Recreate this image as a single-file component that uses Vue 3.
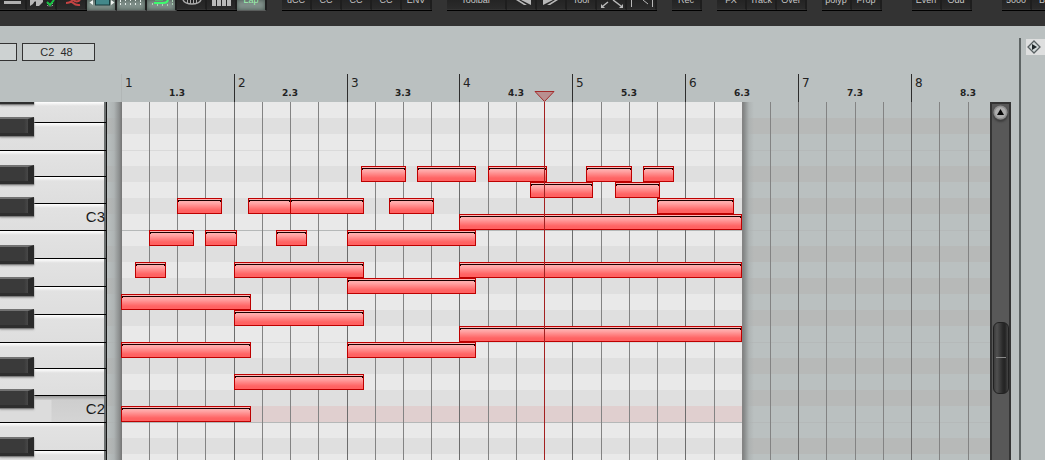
<script setup>
const groups = [
  [
    { icon: 'bar', label: 'Options', w: 27 },
    { icon: 'check', label: 'Quantize' },
    { icon: 'curve', label: 'Humanize' },
    { icon: 'range', label: 'Fit item', lit: true },
    { icon: 'dots', label: 'Grid', lit: true },
    { icon: 'snap', label: 'Snap', lit: true },
    { icon: 'drum', label: 'Drum view' },
    { icon: 'keys', label: 'Piano view' },
    { text: 'Lap', lit: true },
  ],
  [{ text: 'uCC' }, { text: 'CC' }, { text: 'CC' }, { text: 'CC' }, { text: 'ENV' }],
  [
    { text: 'Toolbar', w: 60 },
    { icon: 'prev', label: 'Previous' },
    { icon: 'next', label: 'Next' },
    { text: 'Tool' },
    { icon: 'zoom', label: 'Zoom' },
    { icon: 'fit', label: 'Fit' },
  ],
  [{ text: 'Rec' }],
  [{ text: 'FX' }, { text: 'Track' }, { text: 'Over' }],
  [{ text: 'polyp' }, { text: 'Prop' }],
]
const tailGroups = [
  [{ text: 'Even' }, { text: 'Odd' }],
  [{ text: '5000' }, { text: 'Bar' }],
]
const allGroups = [...groups.map(g => ({ items: g })), ...tailGroups.map(g => ({ items: g, spaced: true }))]

const pitch = 'C2\u00a0\u00a048'

const ROW = 16
const ORIGIN = 14.29
const STEP = 28.225
const at = k => Math.floor(ORIGIN + STEP * k)
const lines = Array.from({ length: 30 }, (_, i) => ({ x: at(i + 1), bar: (i + 1) % 4 === 0 }))
const bars = Array.from({ length: 8 }, (_, i) => ({ n: i + 1, x: at(i * 4), half: at(i * 4 + 2) }))

// one letter per semitone row: w = white, d = black key, k = selected pitch
const rows = [...'wdwwdwdwwdwdwdwwdwdkwdw']
const edges = { 3: 'soft', 8: 'firm', 15: 'soft', 20: 'firm' }

const whiteKeys = [21, 28, 26, 27, 27, 28, 28, 28, 28, 26, 27, 27, 28, 28].map((h, i) => ({
  h,
  label: i === 4 ? 'C3' : i === 11 ? 'C2' : '',
  down: i === 11,
}))
const blackKeys = [-1, 1, 4, 6, 9, 11, 13, 16, 18, 21]

// [row, start, end]
const notes = [
  [4, 254, 299], [4, 310, 369], [4, 381, 440], [4, 479, 525], [4, 536, 567],
  [5, 423, 486], [5, 508, 553],
  [6, 70, 115], [6, 141, 184], [6, 183, 257], [6, 282, 327], [6, 550, 627],
  [7, 352, 635],
  [8, 42, 87], [8, 98, 130], [8, 169, 200], [8, 240, 369],
  [10, 28, 59], [10, 127, 257], [10, 352, 635],
  [11, 240, 369],
  [12, 14, 144], [13, 127, 257], [14, 352, 635],
  [15, 14, 144], [15, 240, 369],
  [17, 127, 257], [19, 14, 144],
]
</script>

<template>
  <div class="editor">
    <header class="toolbar">
      <div v-for="(g, gi) in allGroups" :key="gi" class="group" :class="{ spaced: g.spaced }">
        <button
          v-for="(b, bi) in g.items"
          :key="bi"
          type="button"
          class="tool"
          :class="{ lit: b.lit }"
          :style="{ width: (b.w || 30) + 'px' }"
          :aria-label="b.label"
        >
          <span v-if="b.text">{{ b.text }}</span>
          <svg v-else viewBox="0 0 30 12" width="30" height="12" aria-hidden="true">
            <rect v-if="b.icon === 'bar'" x="6" y="1" width="17" height="3" fill="#b0b0b0" />
            <g v-else-if="b.icon === 'check'">
              <path d="M4 0H17V2L13 6H10V2Q9 0 7 4L4 6Z" fill="#b9b9b9" />
              <path d="M21.500 3v3h5V3" fill="none" stroke="#999" stroke-dasharray="1 1" />
              <path d="M21 2l3 3 4-5" fill="none" stroke="#17c343" stroke-width="2" />
            </g>
            <path v-else-if="b.icon === 'curve'" d="M10 3c3 0 5-1 7-3M15 2c2-1 2 4 9 3M17 0q4 3 7 0" fill="none" stroke="#c54343" stroke-width="2" />
            <g v-else-if="b.icon === 'range'">
              <rect x="9.500" y="-3" width="14" height="8" fill="#43888a" stroke="#173b3d" />
              <path d="M7 0v5L3.500 2.500zM25 0v5l3.500-2.500z" fill="#f0f5f2" />
            </g>
            <path v-else-if="b.icon === 'dots'" d="M4.500 0v6M9.500 3v3M14.500 3v3M19.500 3v3M24.500 0v6M9.500 0v1M14.500 0v1M19.500 0v1" fill="none" stroke="#e4ece8" stroke-dasharray="2 1" />
            <g v-else-if="b.icon === 'snap'">
              <path d="M6.500 3v3M11.500 4v2M16.500 4v2M21.500 4v2M26.500 0v6" stroke="#a9d3b3" stroke-dasharray="2 1" />
              <path d="M8 3h9q5 0 5-4" fill="none" stroke="#3dfc6e" stroke-width="2" />
              <path d="M9 0h8" stroke="#3dfc6e" />
            </g>
            <g v-else-if="b.icon === 'drum'" fill="none" stroke="#aaa">
              <path d="M7 0q2 4 9 4t9-4" stroke-width="1.500" />
              <path d="M11.500 0v4M14.500 0v4M17.500 0v4M20.500 0v4" />
            </g>
            <path v-else-if="b.icon === 'keys'" d="M6 0h4v6H6zM11 0h4v6h-4zM16 0h4v6h-4zM21 0h4v6h-4z" fill="#b9b9b9" />
            <path v-else-if="b.icon === 'prev'" d="M15 0h10v5zM10 0l8 5h3l-8-5z" fill="#b9b9b9" />
            <path v-else-if="b.icon === 'next'" d="M7 0h10L7 5zM19 0h3l-8 5h-3z" fill="#b9b9b9" />
            <g v-else-if="b.icon === 'zoom'" stroke="#b9b9b9" fill="#b9b9b9">
              <path d="M12 2L7 6M17 0l8 6" stroke-width="1.500" />
              <path d="M5 8V4l4 4zM27 8V4l-4 4z" stroke="none" />
            </g>
            <path v-else d="M5.500 0v7M26.500 0v7M17 0l5 4" fill="none" stroke="#b9b9b9" />
          </svg>
        </button>
      </div>
    </header>

    <div class="body">
      <main class="main">
        <div class="info">
          <output class="field short"></output>
          <output class="field">{{ pitch }}</output>
        </div>

        <div class="ruler">
          <template v-for="b in bars" :key="b.n">
            <div class="bar" :class="{ first: b.n === 1 }" :style="{ left: b.x + 'px' }">{{ b.n }}</div>
            <div class="half" :style="{ left: b.half + 'px' }">{{ b.n }}.3</div>
          </template>
          <svg class="marker" viewBox="0 0 21 11" width="21" height="11" aria-hidden="true">
            <path d="M1 .5h19L10.500 10.500z" fill="#b98f90" stroke="#a32a2a" />
          </svg>
        </div>

        <div class="roll">
          <div class="keyboard">
            <div
              v-for="(k, i) in whiteKeys"
              :key="i"
              class="white"
              :class="{ down: k.down }"
              :style="{ height: k.h + 'px' }"
            ><span v-if="k.label" class="name">{{ k.label }}</span></div>
            <div v-for="r in blackKeys" :key="r" class="black" :style="{ top: r * ROW - 1 + 'px' }"></div>
          </div>

          <div class="grid">
            <div class="rows">
              <div v-for="(r, i) in rows" :key="i" class="row" :class="[r, edges[i]]"></div>
            </div>
            <div class="item">
              <div v-for="(r, i) in rows" :key="i" class="row" :class="[r, edges[i]]"></div>
            </div>
            <div class="shade before"></div>
            <div class="shade after"></div>
            <div
              v-for="l in lines"
              :key="l.x"
              class="line"
              :class="{ strong: l.bar }"
              :style="{ left: l.x + 'px' }"
            ></div>
            <div
              v-for="(n, i) in notes"
              :key="i"
              class="note"
              :style="{ top: n[0] * ROW + 'px', left: n[1] + 'px', width: n[2] - n[1] + 'px' }"
            ></div>
            <div class="playhead"></div>
          </div>

          <div class="scroll">
            <button type="button" class="up" aria-label="Scroll up">
              <svg viewBox="0 0 15 15" width="15" height="15" aria-hidden="true">
                <circle cx="7.500" cy="7.500" r="7" fill="#8f8f8f" />
                <circle cx="7.500" cy="7.500" r="5.500" fill="#adadad" />
                <path d="M4 10h7L7.500 4z" fill="#080808" />
              </svg>
            </button>
            <div class="thumb"></div>
          </div>
        </div>
      </main>

      <aside class="side">
        <button type="button" class="expand" aria-label="Show panel">
          <svg viewBox="0 0 16 16" width="16" height="16" aria-hidden="true">
            <path d="M8 2l6 6-6 6-6-6z" fill="#d3dada" stroke="#596062" stroke-width="1.300" />
            <path d="M6 5v6l5-3z" fill="#20282a" />
          </svg>
        </button>
      </aside>
    </div>
  </div>
</template>

<style>
body {
  margin: 0;
  background: #bac0c0;
}
</style>

<style scoped>
.editor {
  display: flex;
  flex-direction: column;
  height: 100vh;
  overflow: hidden;
  background: #bac0c0;
  font-family: "Liberation Sans", Arial, sans-serif;
}
.toolbar {
  display: flex;
  flex: none;
  align-items: flex-start;
  gap: 15px;
  height: 26px;
  background: #333;
  overflow: hidden;
}
.group {
  display: flex;
  flex: none;
  border-bottom: 1px solid #000;
}
.group.spaced {
  margin-left: 15px;
}
.tool {
  box-sizing: border-box;
  height: 10px;
  padding: 0;
  border: 0;
  border-right: 2px solid #1e1e1e;
  border-bottom: 1px solid #333;
  background: linear-gradient(#242424, #2b2b2b);
  color: #c6c6c6;
  font: 9px/12px "Liberation Sans", Arial, sans-serif;
  display: flex;
  align-items: flex-start;
  justify-content: center;
  overflow: hidden;
}
.tool span {
  margin-top: -6px;
}
.tool svg {
  flex: none;
}
.tool.lit {
  height: 11px;
  margin-bottom: -1px;
  border-bottom: 1px solid #5a5d5c;
  background: #7f8f89;
  box-shadow: inset 0 0 4px #46544f;
  color: #9cf0ac;
}
.body {
  display: flex;
  flex: 1;
  min-height: 0;
}
.main {
  display: flex;
  flex-direction: column;
  flex: 1;
  min-width: 0;
}
.info {
  display: flex;
  gap: 5px;
  height: 31px;
  padding-top: 17px;
}
.field {
  box-sizing: border-box;
  width: 73px;
  height: 18px;
  border: 1px solid #333;
  background: #cdd2d2;
  color: #2a2a2a;
  font-size: 11px;
  line-height: 17px;
  text-align: center;
  padding-right: 4px;
}
.field.short {
  width: 17px;
  border-left: 0;
}
.ruler {
  position: relative;
  height: 28px;
  margin-left: 107px;
  color: #222;
  font-family: "DejaVu Sans", Verdana, sans-serif;
}
.bar {
  position: absolute;
  top: 0;
  height: 28px;
  padding-left: 3px;
  border-left: 1px solid #2c2c2c;
  font-size: 12px;
  line-height: 18px;
}
.bar.first {
  border-color: #b1b6b6;
}
.half {
  position: absolute;
  top: 13px;
  width: 30px;
  margin-left: -15px;
  text-align: center;
  font-size: 9px;
  font-weight: bold;
  line-height: 12px;
}
.marker {
  position: absolute;
  left: 427px;
  top: 17px;
}
.roll {
  display: flex;
  flex: 1;
  min-height: 0;
  margin-right: 8px;
}
.keyboard {
  position: relative;
  box-sizing: border-box;
  width: 107px;
  border-right: 1px solid #161616;
  overflow: hidden;
}
.white {
  box-sizing: border-box;
  border-bottom: 1px solid #000;
  background:
    linear-gradient(#6c7070, #6c7070) right / 2px 100% no-repeat,
    linear-gradient(#fff, #e2e2e2 4px, #dedede);
  color: #1a1a1a;
  font-size: 15px;
  line-height: 26px;
  text-align: right;
}
.name {
  padding-right: 1px;
}
.white.down {
  background:
    linear-gradient(#6c7070, #6c7070) right / 2px 100% no-repeat,
    linear-gradient(to right, #dcdcdc 51px, transparent 52px) 0 4px no-repeat,
    linear-gradient(#999, #cecece 4px, #d4d4d4);
}
.black {
  position: absolute;
  left: 0;
  box-sizing: border-box;
  width: 34px;
  height: 19px;
  border: solid;
  border-width: 2px 6px 3px 0;
  border-color: #727272 #2a2a2a #2e2e2e;
  background: linear-gradient(to right, #3a3a3a 24px, #484848);
  box-shadow: 0 1px 1px #808080, 0 2px 2px #b0b0b0;
}
.grid {
  position: relative;
  flex: 1;
  min-width: 0;
  overflow: hidden;
}
.item {
  position: absolute;
  top: 0;
  left: 15px;
  width: 620px;
}
.row {
  box-sizing: border-box;
  height: 16px;
  background: #bac0c0;
}
.row.d {
  background: #b7b9b8;
}
.row.soft,
.row.firm {
  border-top: 1px solid #b5b9b9;
}
.item .row {
  background: #e9e9e9;
}
.item .row.d {
  background: #dfdfdf;
}
.item .row.k {
  background: #e0cfcf;
}
.item .row.soft {
  border-color: #dadada;
}
.item .row.firm {
  border-color: #b5b8b8;
}
.shade {
  position: absolute;
  top: 0;
  bottom: 0;
}
.before {
  left: 0;
  width: 15px;
  background: linear-gradient(to left, #747474, #8e9191 3px, rgba(170, 175, 175, .7) 8px, rgba(186, 192, 192, 0));
}
.after {
  left: 635px;
  width: 12px;
  background: linear-gradient(to right, #7b7b7b, #8e9191 3px, rgba(170, 175, 175, .7) 7px, rgba(186, 192, 192, 0));
}
.line {
  position: absolute;
  top: 0;
  bottom: 0;
  width: 1px;
  background: #838383;
}
.line.strong {
  background: #6c6c6c;
}
.note {
  position: absolute;
  box-sizing: border-box;
  height: 16px;
  border: 1px solid #bd0000;
  background: linear-gradient(#ffb8b8, #ffa6a6 4px, #ff6464 11px, #ff6060);
}
.note::before {
  content: "";
  position: absolute;
  top: 1px;
  left: 0;
  right: 0;
  height: 1px;
  border: 1px solid #1a0000;
  border-bottom: 0;
}
.playhead {
  position: absolute;
  top: 0;
  bottom: 0;
  left: 437px;
  width: 1px;
  background: #a32020;
}
.scroll {
  box-sizing: border-box;
  width: 21px;
  border: solid #333;
  border-width: 2px 2px 0;
  background: #585858;
}
.up {
  display: block;
  width: 15px;
  height: 15px;
  margin: 1px auto 0;
  padding: 0;
  border: 0;
  border-radius: 8px;
  background: none;
  box-shadow: 0 2px 2px #3d3d3d;
}
.thumb {
  position: relative;
  box-sizing: border-box;
  width: 16px;
  height: 72px;
  margin: 202px auto 0;
  border: 1px solid #222;
  border-radius: 6px;
  background: linear-gradient(to right, #3c3c3c, #505050 3px, #282828 9px, #242424 11px, #454545);
}
.thumb::after {
  content: "";
  position: absolute;
  top: 34px;
  left: 2px;
  right: 2px;
  height: 1px;
  background: #8a8a8a;
}
.side {
  box-sizing: border-box;
  width: 26px;
  margin-top: 12px;
  border-left: 2px solid #5e6464;
}
.expand {
  display: block;
  width: 19px;
  height: 16px;
  margin: 1px 0 0 5px;
  padding: 0;
  border: 0;
  background: #dedfdf;
  text-align: left;
}
.expand svg {
  display: block;
}
</style>
